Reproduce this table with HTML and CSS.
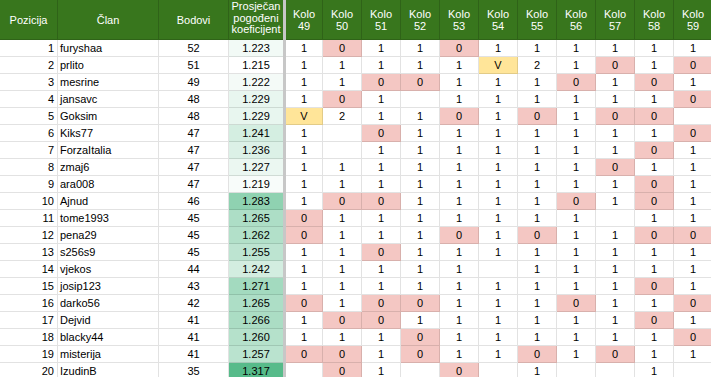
FILE: index.html
```html
<!DOCTYPE html>
<html lang="hr">
<head>
<meta charset="utf-8">
<title>Tablica</title>
<link rel="stylesheet" href="styles.css">
</head>
<body>
<div class="sheet">
  <div class="row head">
    <div class="h">Pozicija</div>
    <div class="h">Član</div>
    <div class="h">Bodovi</div>
    <div class="h h3">Prosječan<br>pogođeni<br>koeficijent</div>
    <div class="sep hsep"></div>
    <div class="h">Kolo<br>49</div>
    <div class="h">Kolo<br>50</div>
    <div class="h">Kolo<br>51</div>
    <div class="h">Kolo<br>52</div>
    <div class="h">Kolo<br>53</div>
    <div class="h">Kolo<br>54</div>
    <div class="h">Kolo<br>55</div>
    <div class="h">Kolo<br>56</div>
    <div class="h">Kolo<br>57</div>
    <div class="h">Kolo<br>58</div>
    <div class="h">Kolo<br>59</div>
  </div>

  <div class="row"><div class="c pos">1</div><div class="c name">furyshaa</div><div class="c">52</div><div class="c k" style="background:#f2faf6">1.223</div><div class="sep"></div><div class="c">1</div><div class="c z">0</div><div class="c">1</div><div class="c">1</div><div class="c z">0</div><div class="c">1</div><div class="c">1</div><div class="c">1</div><div class="c">1</div><div class="c">1</div><div class="c">1</div></div>
  <div class="row"><div class="c pos">2</div><div class="c name">prlito</div><div class="c">51</div><div class="c k" style="background:#ffffff">1.215</div><div class="sep"></div><div class="c">1</div><div class="c">1</div><div class="c">1</div><div class="c">1</div><div class="c">1</div><div class="c v">V</div><div class="c">2</div><div class="c">1</div><div class="c z">0</div><div class="c">1</div><div class="c z">0</div></div>
  <div class="row"><div class="c pos">3</div><div class="c name">mesrine</div><div class="c">49</div><div class="c k" style="background:#f4faf7">1.222</div><div class="sep"></div><div class="c">1</div><div class="c">1</div><div class="c z">0</div><div class="c z">0</div><div class="c">1</div><div class="c">1</div><div class="c">1</div><div class="c z">0</div><div class="c">1</div><div class="c z">0</div><div class="c">1</div></div>
  <div class="row"><div class="c pos">4</div><div class="c name">jansavc</div><div class="c">48</div><div class="c k" style="background:#e8f6ef">1.229</div><div class="sep"></div><div class="c">1</div><div class="c z">0</div><div class="c">1</div><div class="c"></div><div class="c">1</div><div class="c">1</div><div class="c">1</div><div class="c">1</div><div class="c">1</div><div class="c">1</div><div class="c z">0</div></div>
  <div class="row"><div class="c pos">5</div><div class="c name">Goksim</div><div class="c">48</div><div class="c k" style="background:#e8f6ef">1.229</div><div class="sep"></div><div class="c v">V</div><div class="c">2</div><div class="c">1</div><div class="c">1</div><div class="c z">0</div><div class="c">1</div><div class="c z">0</div><div class="c">1</div><div class="c z">0</div><div class="c z">0</div><div class="c"></div></div>
  <div class="row"><div class="c pos">6</div><div class="c name">Kiks77</div><div class="c">47</div><div class="c k" style="background:#d4eee1">1.241</div><div class="sep"></div><div class="c">1</div><div class="c"></div><div class="c z">0</div><div class="c">1</div><div class="c">1</div><div class="c">1</div><div class="c">1</div><div class="c">1</div><div class="c">1</div><div class="c">1</div><div class="c z">0</div></div>
  <div class="row"><div class="c pos">7</div><div class="c name">ForzaItalia</div><div class="c">47</div><div class="c k" style="background:#dcf1e7">1.236</div><div class="sep"></div><div class="c">1</div><div class="c"></div><div class="c">1</div><div class="c">1</div><div class="c">1</div><div class="c">1</div><div class="c">1</div><div class="c">1</div><div class="c">1</div><div class="c z">0</div><div class="c">1</div></div>
  <div class="row"><div class="c pos">8</div><div class="c name">zmaj6</div><div class="c">47</div><div class="c k" style="background:#ebf7f1">1.227</div><div class="sep"></div><div class="c">1</div><div class="c">1</div><div class="c">1</div><div class="c">1</div><div class="c">1</div><div class="c">1</div><div class="c">1</div><div class="c">1</div><div class="c z">0</div><div class="c">1</div><div class="c">1</div></div>
  <div class="row"><div class="c pos">9</div><div class="c name">ara008</div><div class="c">47</div><div class="c k" style="background:#f8fcfa">1.219</div><div class="sep"></div><div class="c">1</div><div class="c">1</div><div class="c">1</div><div class="c">1</div><div class="c">1</div><div class="c">1</div><div class="c">1</div><div class="c">1</div><div class="c">1</div><div class="c z">0</div><div class="c">1</div></div>
  <div class="row"><div class="c pos">10</div><div class="c name">Ajnud</div><div class="c">46</div><div class="c k" style="background:#8fd2b1">1.283</div><div class="sep"></div><div class="c">1</div><div class="c z">0</div><div class="c z">0</div><div class="c">1</div><div class="c">1</div><div class="c">1</div><div class="c">1</div><div class="c z">0</div><div class="c">1</div><div class="c z">0</div><div class="c">1</div></div>
  <div class="row"><div class="c pos">11</div><div class="c name">tome1993</div><div class="c">45</div><div class="c k" style="background:#addec6">1.265</div><div class="sep"></div><div class="c z">0</div><div class="c">1</div><div class="c">1</div><div class="c">1</div><div class="c">1</div><div class="c">1</div><div class="c">1</div><div class="c">1</div><div class="c"></div><div class="c">1</div><div class="c">1</div></div>
  <div class="row"><div class="c pos">12</div><div class="c name">pena29</div><div class="c">45</div><div class="c k" style="background:#b2e0c9">1.262</div><div class="sep"></div><div class="c z">0</div><div class="c">1</div><div class="c">1</div><div class="c">1</div><div class="c z">0</div><div class="c">1</div><div class="c z">0</div><div class="c">1</div><div class="c">1</div><div class="c z">0</div><div class="c z">0</div></div>
  <div class="row"><div class="c pos">13</div><div class="c name">s256s9</div><div class="c">45</div><div class="c k" style="background:#bde4d1">1.255</div><div class="sep"></div><div class="c">1</div><div class="c">1</div><div class="c z">0</div><div class="c">1</div><div class="c">1</div><div class="c">1</div><div class="c">1</div><div class="c">1</div><div class="c">1</div><div class="c">1</div><div class="c">1</div></div>
  <div class="row"><div class="c pos">14</div><div class="c name">vjekos</div><div class="c">44</div><div class="c k" style="background:#d3ede0">1.242</div><div class="sep"></div><div class="c">1</div><div class="c">1</div><div class="c">1</div><div class="c">1</div><div class="c">1</div><div class="c"></div><div class="c">1</div><div class="c">1</div><div class="c">1</div><div class="c">1</div><div class="c">1</div></div>
  <div class="row"><div class="c pos">15</div><div class="c name">josip123</div><div class="c">43</div><div class="c k" style="background:#a3dabf">1.271</div><div class="sep"></div><div class="c">1</div><div class="c">1</div><div class="c">1</div><div class="c">1</div><div class="c">1</div><div class="c">1</div><div class="c">1</div><div class="c">1</div><div class="c">1</div><div class="c z">0</div><div class="c">1</div></div>
  <div class="row"><div class="c pos">16</div><div class="c name">darko56</div><div class="c">42</div><div class="c k" style="background:#addec6">1.265</div><div class="sep"></div><div class="c z">0</div><div class="c">1</div><div class="c z">0</div><div class="c z">0</div><div class="c">1</div><div class="c">1</div><div class="c">1</div><div class="c z">0</div><div class="c">1</div><div class="c">1</div><div class="c z">0</div></div>
  <div class="row"><div class="c pos">17</div><div class="c name">Dejvid</div><div class="c">41</div><div class="c k" style="background:#abddc4">1.266</div><div class="sep"></div><div class="c">1</div><div class="c z">0</div><div class="c z">0</div><div class="c">1</div><div class="c">1</div><div class="c">1</div><div class="c">1</div><div class="c">1</div><div class="c">1</div><div class="c z">0</div><div class="c">1</div></div>
  <div class="row"><div class="c pos">18</div><div class="c name">blacky44</div><div class="c">41</div><div class="c k" style="background:#b5e1cb">1.260</div><div class="sep"></div><div class="c">1</div><div class="c">1</div><div class="c">1</div><div class="c z">0</div><div class="c">1</div><div class="c">1</div><div class="c">1</div><div class="c">1</div><div class="c">1</div><div class="c">1</div><div class="c z">0</div></div>
  <div class="row"><div class="c pos">19</div><div class="c name">misterija</div><div class="c">41</div><div class="c k" style="background:#bae3cf">1.257</div><div class="sep"></div><div class="c z">0</div><div class="c z">0</div><div class="c">1</div><div class="c z">0</div><div class="c">1</div><div class="c">1</div><div class="c z">0</div><div class="c">1</div><div class="c z">0</div><div class="c">1</div><div class="c">1</div></div>
  <div class="row"><div class="c pos">20</div><div class="c name">IzudinB</div><div class="c">35</div><div class="c k" style="background:#57bb8a">1.317</div><div class="sep"></div><div class="c"></div><div class="c z">0</div><div class="c">1</div><div class="c"></div><div class="c z">0</div><div class="c"></div><div class="c">1</div><div class="c"></div><div class="c"></div><div class="c">1</div><div class="c"></div></div>
</div>
</body>
</html>
```

FILE: styles.css
```css
html, body {
  margin: 0;
  padding: 0;
  background: #ffffff;
  overflow: hidden;
}

.sheet {
  width: 711px;
  height: 377px;
  overflow: hidden;
  font-family: "Liberation Sans", Arial, sans-serif;
  font-size: 11px;
  color: #000000;
}

.row {
  display: grid;
  grid-template-columns: 58px 101px 70px 54px 3px 37px repeat(10, 39px);
  height: 17px;
}

.row.head {
  height: 40px;
}

.c, .h {
  box-sizing: border-box;
  border-right: 1px solid rgba(0, 0, 0, 0.115);
  border-bottom: 1px solid rgba(0, 0, 0, 0.115);
  white-space: nowrap;
  overflow: hidden;
}

.c {
  line-height: 16px;
  text-align: center;
}

.c.pos {
  text-align: right;
  padding-right: 3px;
}

.c.name {
  text-align: left;
  padding-left: 2px;
}

.c.k {
  border-right: none;
}

.c.z {
  background: #f4c7c3;
}

.c.v {
  background: #ffe599;
}

.sep {
  background: #c7c7c7;
}

.h {
  background: #38761d;
  color: #ffffff;
  line-height: 12px;
  text-align: center;
  display: flex;
  flex-direction: column;
  justify-content: center;
  border-color: rgba(0, 0, 0, 0.16);
}

.h.h3 {
  justify-content: flex-start;
  padding-top: 1px;
  line-height: 11.5px;
  border-right: none;
}

.hsep {
  background: #c7c7c7;
}
```
